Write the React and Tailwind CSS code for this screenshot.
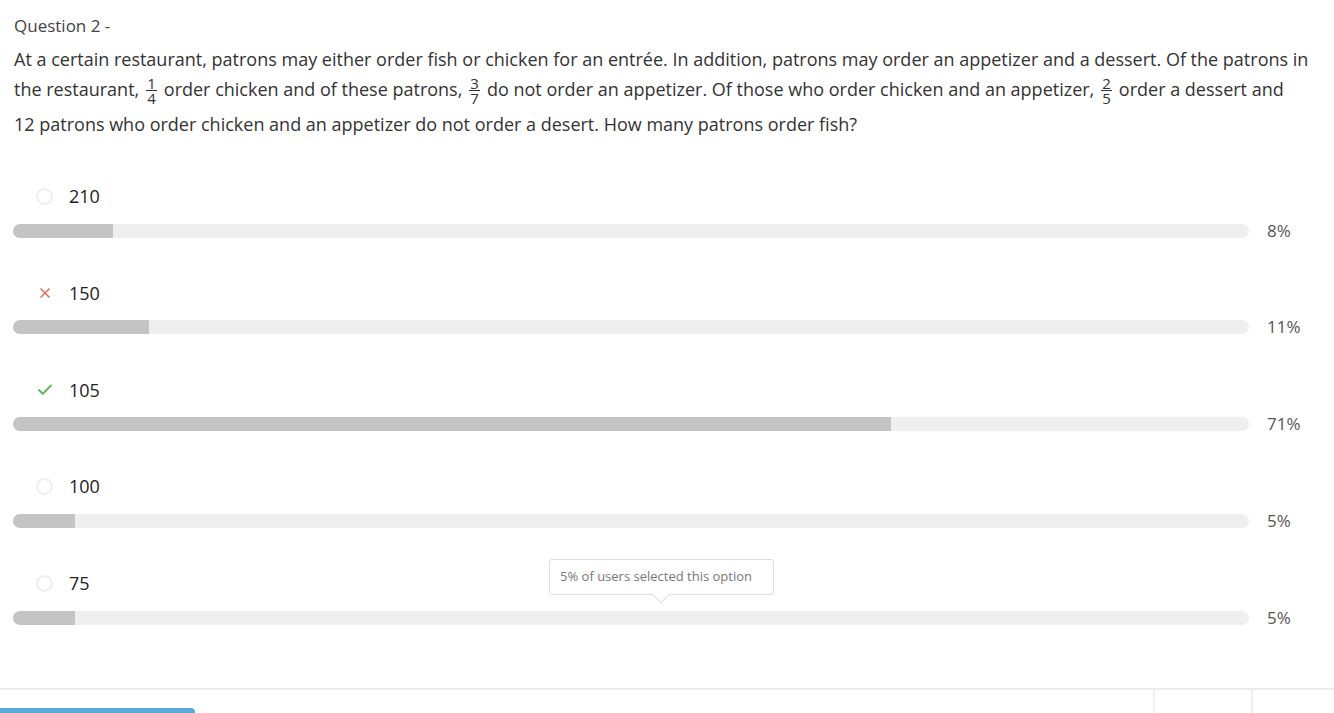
import { Check, X } from "lucide-react";

const options = [
  { label: "210", pct: 8, fill: 100, status: "none" },
  { label: "150", pct: 11, fill: 136, status: "wrong" },
  { label: "105", pct: 71, fill: 878, status: "right" },
  { label: "100", pct: 5, fill: 62, status: "none" },
  { label: "75", pct: 5, fill: 62, status: "none", tooltip: true },
];

function Frac({ top, bottom }) {
  return (
    <span className="inline-flex flex-col items-center align-middle mx-[7px] text-[15px] leading-[14px] -mt-[2px]">
      <span className="px-[1px]">{top}</span>
      <span className="self-stretch h-px bg-[#333]"></span>
      <span className="px-[1px]">{bottom}</span>
    </span>
  );
}

function OptionIcon({ status }) {
  if (status === "wrong") {
    return <X size={16} strokeWidth={2.5} className="text-[#e0705f]" />;
  }
  if (status === "right") {
    return <Check size={18} strokeWidth={2.5} className="text-[#5cb85c]" />;
  }
  return <span className="w-[17px] h-[17px] rounded-full border-2 border-[#efefef]"></span>;
}

export default function App() {
  return (
    <div
      className="w-[1334px] h-[713px] bg-white overflow-hidden flex flex-col text-[#333]"
      style={{ fontFamily: "'Open Sans', Lato, sans-serif" }}
    >
      <div className="flex-1 pl-[14px]">
        {/* QUESTION */}
        <div className="pt-[14px] text-[17px] leading-[24px] text-[#444]">Question 2 -</div>
        <div className="mt-[7px] text-[18px] leading-[29px] text-[#333] whitespace-nowrap">
          <div>
            At a certain restaurant, patrons may either order fish or chicken for an entrée. In addition, patrons
            may order an appetizer and a dessert. Of the patrons in
          </div>
          <div className="mt-[1px]">
            the restaurant,
            <Frac top="1" bottom="4" />
            order chicken and of these patrons,
            <Frac top="3" bottom="7" />
            do not order an appetizer. Of those who order chicken and an appetizer,
            <Frac top="2" bottom="5" />
            order a dessert and
          </div>
          <div className="mt-[5px]">
            12 patrons who order chicken and an appetizer do not order a desert. How many patrons order fish?
          </div>
        </div>

        {/* OPTIONS */}
        <div className="mt-[46px]">
          {options.map((o) => (
            <div key={o.label} className="relative h-[96.75px]">
              <div className="flex items-center h-[24px]">
                <div className="w-[60px] flex justify-center pl-[1px]">
                  <OptionIcon status={o.status} />
                </div>
                <span className="text-[18px] text-[#222] -ml-[5px]">{o.label}</span>
              </div>
              <div className="flex items-center mt-[15px] -ml-[1px]">
                <div className="relative w-[1236px] h-[14px] rounded-full bg-[#efefef] overflow-hidden">
                  <div className="h-full bg-[#c4c4c4]" style={{ width: o.fill }}></div>
                </div>
                <span className="pl-[18px] text-[17px] leading-[14px] text-[#555]">{o.pct}%</span>
              </div>

              {o.tooltip && (
                <div className="absolute left-[535px] -top-[13px]">
                  <div className="relative px-[10px] h-[36px] w-[225px] flex items-center border border-[#ddd] rounded-[3px] bg-white text-[13px] text-[#777]">
                    5% of users selected this option
                    <span className="absolute left-[105px] -bottom-[7px] w-[12px] h-[12px] bg-white border-r border-b border-[#ddd] rotate-45"></span>
                  </div>
                </div>
              )}
            </div>
          ))}
        </div>
      </div>

      {/* FOOTER */}
      <div className="h-[25px] border-t-2 border-[#ececec] flex">
        <div className="flex-1 flex flex-col justify-end">
          <div className="w-[195px] h-[5px] bg-[#5ba9d6] rounded-tr-[4px]"></div>
        </div>
        <div className="w-[98px] border-l-2 border-[#efefef]"></div>
        <div className="w-[83px] border-l-2 border-[#efefef]"></div>
      </div>
    </div>
  );
}
